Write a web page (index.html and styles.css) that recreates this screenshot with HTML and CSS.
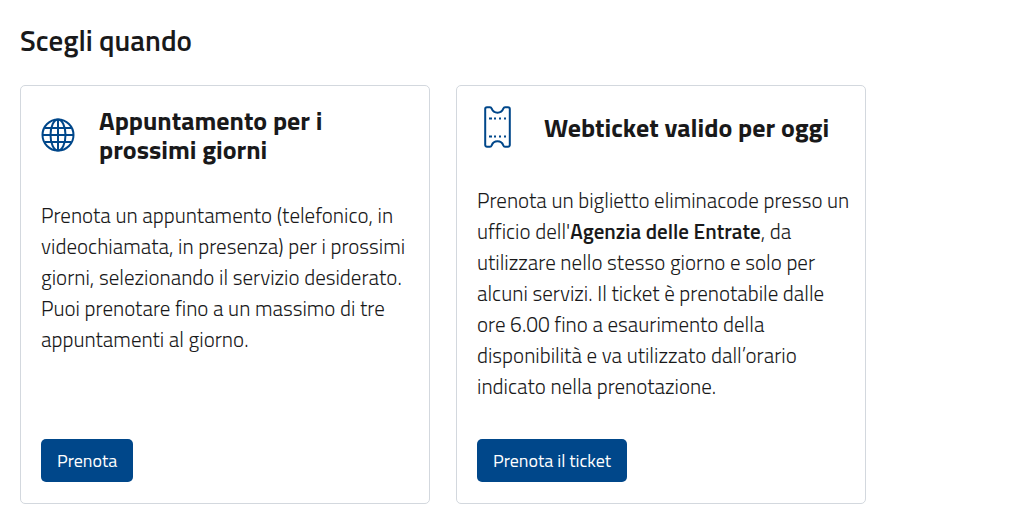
FILE: index.html
```html
<!DOCTYPE html>
<html lang="it">
<head>
    <meta charset="UTF-8">
    <meta name="viewport" content="width=device-width, initial-scale=1.0">
    <title>Scegli quando</title>
    <link rel="stylesheet" href="styles.css">
</head>
<body>

    <main class="page">
        <h1 class="page-title">Scegli quando</h1>

        <div class="cards">
            <!-- Appuntamento -->
            <section class="card">
                <div class="card-header">
                    <svg class="icon-globe" viewBox="0 0 33 33" aria-hidden="true">
                        <circle cx="17" cy="16" r="15.5"/>
                        <ellipse cx="17" cy="16" rx="7.5" ry="15.5"/>
                        <path d="M17 .5v31M1.500 16h31M4 9h26M4 23h26"/>
                    </svg>
                    <h2 class="card-title">Appuntamento per i prossimi giorni</h2>
                </div>
                <p class="card-text">Prenota un appuntamento (telefonico, in videochiamata, in presenza) per i prossimi giorni, selezionando il servizio desiderato. Puoi prenotare fino a un massimo di tre appuntamenti al giorno.</p>
                <button type="button" class="btn">Prenota</button>
            </section>

            <!-- Webticket -->
            <section class="card">
                <div class="card-header">
                    <svg class="icon-ticket" viewBox="0 0 42 43" aria-hidden="true">
                        <path d="M10 1.200H13c1 0 1.400.7 1.700 1.500a6.200 6.200 0 0 0 11.600 0C26.600 1.900 27 1.200 28 1.200h3a1.800 1.800 0 0 1 1.800 1.800v36a1.800 1.800 0 0 1-1.800 1.800H28c-1 0-1.400-.7-1.700-1.500a6.200 6.200 0 0 0-11.600 0c-.3.800-.7 1.500-1.700 1.500H10A1.800 1.800 0 0 1 8.200 39V3A1.800 1.800 0 0 1 10 1.200z"/>
                        <path class="dots" d="M12 12.500h3m2 0h2m3 0h2m3 0h2M12 30.500h3m2 0h2m3 0h2m3 0h2"/>
                    </svg>
                    <h2 class="card-title">Webticket valido per oggi</h2>
                </div>
                <p class="card-text">Prenota un biglietto eliminacode presso un ufficio dell'<strong>Agenzia delle Entrate</strong>, da utilizzare nello stesso giorno e solo per alcuni servizi. Il ticket è prenotabile dalle ore 6.00 fino a esaurimento della disponibilità e va utilizzato dall’orario indicato nella prenotazione.</p>
                <button type="button" class="btn">Prenota il ticket</button>
            </section>
        </div>
    </main>

</body>
</html>
```
FILE: styles.css
```css
* {
    box-sizing: border-box;
}
body {
    font-family: "Titillium Web", Roboto, sans-serif;
    color: #19191a;
    background-color: #fff;
    margin: 0;
}
.page {
    max-width: 886px;
    padding: 22px 20px 8px;
}
.page-title {
    font-size: 29px;
    font-weight: 600;
    line-height: 36px;
    margin: 0 0 27px;
}
.cards {
    display: grid;
    grid-template-columns: 1fr 1fr;
    gap: 26px;
}
.card {
    display: flex;
    flex-direction: column;
    align-items: flex-start;
    padding: 20px 14px 21px 20px;
    border: 1px solid #d3d8de;
    border-radius: 5px;
}
.card-header {
    display: flex;
    align-items: center;
    gap: 25px;
    min-height: 43px;
    margin-bottom: 36px;
}
.card-title {
    font-size: 26px;
    font-weight: 700;
    line-height: 29px;
    margin: 0;
}
.card-text {
    font-size: 21px;
    font-weight: 300;
    line-height: 31px;
    margin: 0 0 37px;
}
.card-text strong {
    font-weight: 600;
}
.icon-globe,
.icon-ticket {
    flex-shrink: 0;
    fill: none;
    stroke: #00478a;
    stroke-width: 2;
}
.icon-globe {
    width: 33px;
    height: 33px;
    overflow: visible;
}
.icon-ticket {
    width: 42px;
    height: 43px;
}
.btn {
    font-family: inherit;
    font-size: 18px;
    line-height: 27px;
    color: #fff;
    background-color: #00478a;
    margin-top: auto;
    padding: 8px 16px;
    border: none;
    border-radius: 5px;
    cursor: pointer;
}
.btn:hover {
    background-color: #003a70;
}
```
